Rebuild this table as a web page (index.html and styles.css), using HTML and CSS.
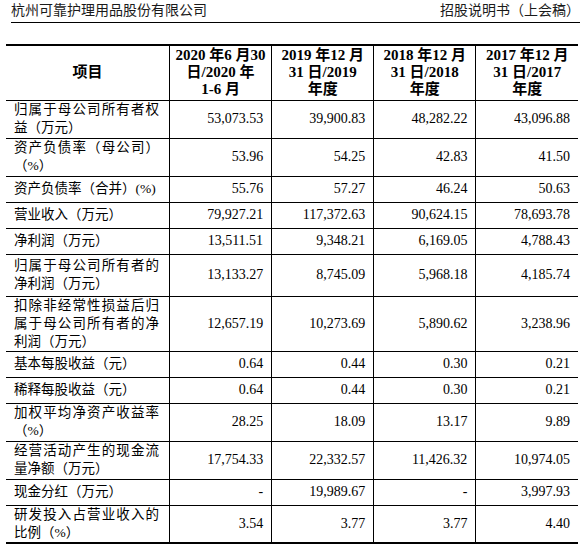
FILE: index.html
```html
<!DOCTYPE html>
<html lang="zh-CN">
<head>
    <meta charset="UTF-8">
    <meta name="viewport" content="width=device-width, initial-scale=1.0">
    <title>招股说明书（上会稿）</title>
    <link rel="stylesheet" href="styles.css">
</head>
<body>
    <div class="page-header">
        <span>杭州可靠护理用品股份有限公司</span>
        <span>招股说明书（上会稿）</span>
    </div>
    <table class="data-table">
        <thead>
            <tr class="head">
                <th>项目</th>
                <th>2020 年6 月30<br>日/2020 年<br>1-6 月</th>
                <th>2019 年12 月<br>31 日/2019<br>年度</th>
                <th>2018 年12 月<br>31 日/2018<br>年度</th>
                <th>2017 年12 月<br>31 日/2017<br>年度</th>
            </tr>
        </thead>
        <tbody>
            <tr class="two">
                <td class="name">归属于母公司所有者权益（万元）</td>
                <td>53,073.53</td><td>39,900.83</td><td>48,282.22</td><td>43,096.88</td>
            </tr>
            <tr class="two">
                <td class="name">资产负债率（母公司）（%）</td>
                <td>53.96</td><td>54.25</td><td>42.83</td><td>41.50</td>
            </tr>
            <tr class="one">
                <td class="name">资产负债率（合并）(%)</td>
                <td>55.76</td><td>57.27</td><td>46.24</td><td>50.63</td>
            </tr>
            <tr class="one">
                <td class="name">营业收入（万元）</td>
                <td>79,927.21</td><td>117,372.63</td><td>90,624.15</td><td>78,693.78</td>
            </tr>
            <tr class="one">
                <td class="name">净利润（万元）</td>
                <td>13,511.51</td><td>9,348.21</td><td>6,169.05</td><td>4,788.43</td>
            </tr>
            <tr class="two tall">
                <td class="name">归属于母公司所有者的净利润（万元）</td>
                <td>13,133.27</td><td>8,745.09</td><td>5,968.18</td><td>4,185.74</td>
            </tr>
            <tr class="three">
                <td class="name">扣除非经常性损益后归属于母公司所有者的净利润（万元）</td>
                <td>12,657.19</td><td>10,273.69</td><td>5,890.62</td><td>3,238.96</td>
            </tr>
            <tr class="one">
                <td class="name">基本每股收益（元）</td>
                <td>0.64</td><td>0.44</td><td>0.30</td><td>0.21</td>
            </tr>
            <tr class="one">
                <td class="name">稀释每股收益（元）</td>
                <td>0.64</td><td>0.44</td><td>0.30</td><td>0.21</td>
            </tr>
            <tr class="two">
                <td class="name">加权平均净资产收益率（%）</td>
                <td>28.25</td><td>18.09</td><td>13.17</td><td>9.89</td>
            </tr>
            <tr class="two">
                <td class="name">经营活动产生的现金流量净额（万元）</td>
                <td>17,754.33</td><td>22,332.57</td><td>11,426.32</td><td>10,974.05</td>
            </tr>
            <tr class="one">
                <td class="name">现金分红（万元）</td>
                <td>-</td><td>19,989.67</td><td>-</td><td>3,997.93</td>
            </tr>
            <tr class="two">
                <td class="name">研发投入占营业收入的比例（%）</td>
                <td>3.54</td><td>3.77</td><td>3.77</td><td>4.40</td>
            </tr>
        </tbody>
    </table>
</body>
</html>
```

FILE: styles.css
```css
body {
    margin: 0;
    background-color: #fff;
    color: #000;
    font-family: "Liberation Serif", "Noto Sans CJK SC", serif;
}

.page-header {
    display: flex;
    justify-content: space-between;
    width: 569px;
    margin-left: 11px;
    padding-top: 2px;
    height: 20px;
    border-bottom: 1px solid #000;
    font-size: 14px;
    line-height: 18px;
    color: #1a1a1a;
}

.data-table {
    margin-top: 21px;
    margin-left: 6px;
    width: 572px;
    border-collapse: collapse;
    table-layout: fixed;
    border-top: 2px solid #000;
    border-bottom: 2px solid #000;
}

.data-table th,
.data-table td {
    border: 1px solid #000;
    padding: 0 8px;
    vertical-align: middle;
}

.data-table tr > :first-child {
    border-left: none;
}

.data-table tr > :last-child {
    border-right: none;
}

.data-table th {
    font-size: 15px;
    font-weight: bold;
    line-height: 17px;
    text-align: center;
    padding: 0 2px;
}

.data-table th:first-child {
    width: 159px;
}

.head {
    height: 55px;
}

.data-table td {
    font-size: 14px;
    line-height: 18px;
    text-align: right;
}

.data-table td.name {
    font-size: 13.5px;
    text-align: justify;
    text-justify: inter-character;
    padding: 0 10px 0 8px;
}

.one {
    height: 26px;
}

.two {
    height: 38px;
}

.two.tall {
    height: 42px;
}

.three {
    height: 54px;
}
```
